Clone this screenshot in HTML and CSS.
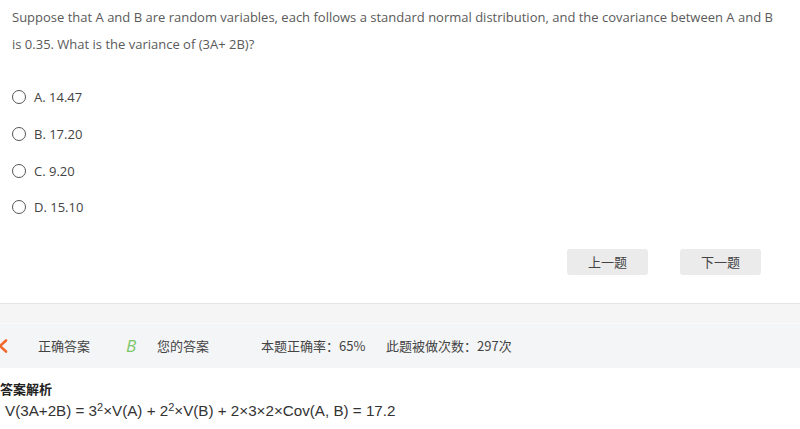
FILE: index.html
```html
<!DOCTYPE html>
<html lang="zh-CN">
  <head>
    <meta charset="utf-8">
    <title>题目</title>
    <link rel="stylesheet" href="styles.css">
  </head>
  <body>
    <div class="question">
      <p class="stem">Suppose that A and B are random variables, each follows a standard normal distribution, and the covariance between A and B is 0.35. What is the variance of (3A+ 2B)?</p>
      <ul class="options">
        <li><span class="radio"></span>A. 14.47</li>
        <li><span class="radio"></span>B. 17.20</li>
        <li><span class="radio"></span>C. 9.20</li>
        <li><span class="radio"></span>D. 15.10</li>
      </ul>
      <div class="actions">
        <button class="prev">上一题</button>
        <button class="next">下一题</button>
      </div>
    </div>
    <div class="stats">
      <div class="stats-top"></div>
      <div class="stats-row">
        <span class="wrong-icon"><svg width="16" height="14" viewBox="0 0 16 14"><path d="M2 1.5 L14 12.5 M14 1.5 L2 12.5" stroke="#f06a2e" stroke-width="2.6" fill="none" stroke-linecap="round"/></svg></span>
        <span class="label right-label">正确答案</span>
        <span class="answer">B</span>
        <span class="label mine">您的答案</span>
        <span class="label rate">本题正确率：65%</span>
        <span class="label">此题被做次数：297次</span>
      </div>
    </div>
    <div class="analysis">
      <h4>答案解析</h4>
      <p class="formula"><span class="spell">V</span>(3A+2B) = 3<sup>2</sup>×V(A) + 2<sup>2</sup>×V(B) + 2×3×2×Cov(A, B) = 17.2</p>
    </div>
  </body>
</html>
```

FILE: styles.css
```css
html {
  background: #fff;
}
body {
  margin: 0;
  font-family: "Open Sans", "Noto Sans CJK SC", sans-serif;
  font-size: 13px;
  color: #555;
  overflow: hidden;
}
.question {
  padding: 4px 12px 0 12px;
}
.stem {
  margin: 0;
  padding-right: 8px;
  line-height: 27px;
  color: #5a5a5a;
}
.options {
  list-style: none;
  margin: 21px 0 0 0;
  padding: 0;
}
.options li {
  display: flex;
  align-items: center;
  height: 36.7px;
  color: #444;
}
.radio {
  width: 12px;
  height: 12px;
  border: 1.3px solid #555;
  border-radius: 50%;
  margin-right: 8px;
  box-sizing: content-box;
}
.actions {
  display: flex;
  justify-content: flex-end;
  gap: 32px;
  padding: 23px 27px 0 0;
  height: 54px;
}
.actions button {
  width: 81px;
  height: 26px;
  border: none;
  border-radius: 3px;
  background: #ebebeb;
  color: #444;
  font-family: "Noto Sans CJK SC", sans-serif;
  font-size: 13px;
  cursor: pointer;
}
.stats {
  border-top: 1px solid #e6e6e6;
}
.stats-top {
  height: 19px;
  background: #f5f5f5;
  border-bottom: 1px solid #fafafa;
}
.stats-row {
  display: flex;
  align-items: center;
  height: 44px;
  background: #f4f5f7;
  font-family: "Noto Sans CJK SC", sans-serif;
  color: #444;
}
.wrong-icon {
  display: flex;
  margin-left: -8px;
  width: 46px;
}
.right-label {
  width: 88px;
}
.answer {
  width: 31px;
  color: #7cc66a;
  font-style: italic;
  font-size: 17px;
  font-family: "Open Sans", sans-serif;
}
.mine {
  width: 104px;
}
.rate {
  width: 125px;
}
.analysis {
  padding-top: 12px;
}
.analysis h4 {
  margin: 0;
  font-size: 13px;
  color: #222;
  line-height: 18px;
  font-family: "Noto Sans CJK SC", sans-serif;
}
.formula {
  margin: 4px 0 0 5px;
  font-family: "Liberation Sans", Arial, sans-serif;
  font-size: 15.2px;
  color: #333;
}
.formula sup {
  font-size: 11px;
  vertical-align: 5px;
  line-height: 0;
}
.spell {
  text-decoration: underline wavy #5b3fc4;
  text-decoration-thickness: 1.5px;
  text-underline-offset: 3px;
}
```
